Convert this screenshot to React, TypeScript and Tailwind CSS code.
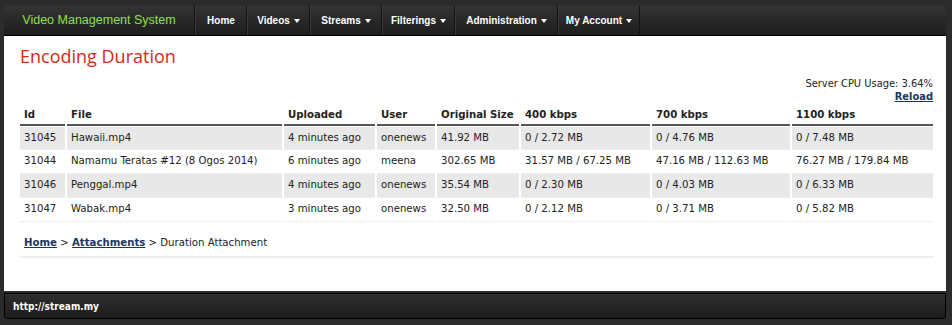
import React from 'react';

const navItems = [
  { label: 'Home', w: 'w-[52px]', caret: false },
  { label: 'Videos', w: 'w-[63px]', caret: true },
  { label: 'Streams', w: 'w-[72px]', caret: true },
  { label: 'Filterings', w: 'w-[73px]', caret: true },
  { label: 'Administration', w: 'w-[103px]', caret: true },
  { label: 'My Account', w: 'w-[82px]', caret: true },
];

const rows = [
  ['31045', 'Hawaii.mp4', '4 minutes ago', 'onenews', '41.92 MB', '0 / 2.72 MB', '0 / 4.76 MB', '0 / 7.48 MB'],
  ['31044', 'Namamu Teratas #12 (8 Ogos 2014)', '6 minutes ago', 'meena', '302.65 MB', '31.57 MB / 67.25 MB', '47.16 MB / 112.63 MB', '76.27 MB / 179.84 MB'],
  ['31046', 'Penggal.mp4', '4 minutes ago', 'onenews', '35.54 MB', '0 / 2.30 MB', '0 / 4.03 MB', '0 / 6.33 MB'],
  ['31047', 'Wabak.mp4', '3 minutes ago', 'onenews', '32.50 MB', '0 / 2.12 MB', '0 / 3.71 MB', '0 / 5.82 MB'],
];

const headers = ['Id', 'File', 'Uploaded', 'User', 'Original Size', '400 kbps', '700 kbps', '1100 kbps'];
const widths = ['w-[45px]', 'w-[215px]', 'w-[91px]', 'w-[58px]', 'w-[82px]', 'w-[129px]', 'w-[138px]', 'w-[141px]'];

function Caret() {
  return <span className="inline-block ml-1 w-0 h-0 border-l-[3px] border-r-[3px] border-t-[4px] border-l-transparent border-r-transparent border-t-white align-middle" />;
}

export default function App() {
  return (
    <div className="w-[952px] h-[325px] bg-[#2b2b2b] pt-[6px] px-[4px] flex flex-col" style={{ fontFamily: '"DejaVu Sans Condensed", "DejaVu Sans", sans-serif' }}>
      <nav className="h-[30px] w-[942px] flex bg-gradient-to-b from-[#333333] to-[#1e1e1e] rounded-t-[3px] border-b border-black">
        <div className="w-[191px] flex items-center justify-center border-r border-[#111] text-[12.5px] text-[#8ee04e]" style={{ fontFamily: '"Liberation Sans", Arial, sans-serif' }}>
          Video Management System
        </div>
        {navItems.map((n) => (
          <div key={n.label} className={`${n.w} flex items-center justify-center border-l border-[#3a3a3a] border-r border-r-[#111] text-[10px] font-bold text-white`} style={{ fontFamily: '"Liberation Sans", Arial, sans-serif' }}>
            {n.label}
            {n.caret && <Caret />}
          </div>
        ))}
      </nav>
      <main className="h-[255px] w-[942px] bg-white pl-[16px] pr-[13px] pt-[8px]">
        <h1 className="text-[18px] text-[#d42a12] leading-[24px]" style={{ fontFamily: '"Open Sans", "DejaVu Sans", sans-serif' }}>Encoding Duration</h1>
        <div className="text-right text-[11px] text-[#222] mt-[9px] leading-[14px]">Server CPU Usage: 3.64%</div>
        <div className="text-right text-[11px] leading-[12px]">
          <a className="font-bold text-[#1c3566] underline">Reload</a>
        </div>
        <table className="mt-[3px] w-[917px] border-separate border-spacing-x-[2px] border-spacing-y-0 -mx-[2px] text-[11.3px] text-[#222] table-fixed">
          <thead>
            <tr>
              {headers.map((h, i) => (
                <th key={h} className={`${widths[i]} text-left font-bold h-[20px] px-[4px] border-b-2 border-[#555] align-middle whitespace-nowrap`}>{h}</th>
              ))}
            </tr>
          </thead>
          <tbody>
            {rows.map((r, ri) => (
              <tr key={r[0]} className={ri % 2 === 0 ? 'bg-[#e8e8e8]' : 'bg-white'}>
                {r.map((c, ci) => (
                  <td key={ci} className={`h-[24px] px-[4px] whitespace-nowrap border-b border-[#eeeeee] ${ri === 0 ? 'border-t border-t-white' : ''}`}>{c}</td>
                ))}
              </tr>
            ))}
          </tbody>
        </table>
        <div className="mt-[13px] pb-[4px] px-[4px] border-b-2 border-[#eeeeee] text-[11.3px] text-[#222]">
          <a className="font-bold text-[#1c3566] underline">Home</a> &gt; <a className="font-bold text-[#1c3566] underline">Attachments</a> &gt; Duration Attachment
        </div>
      </main>
      <footer className="mt-[2px] h-[26px] w-[942px] bg-gradient-to-b from-[#2e2e2e] to-[#1c1c1c] border border-black rounded-b-[3px] flex items-center px-[8px] text-[10px] font-bold text-white">
        http://stream.my
      </footer>
    </div>
  );
}
